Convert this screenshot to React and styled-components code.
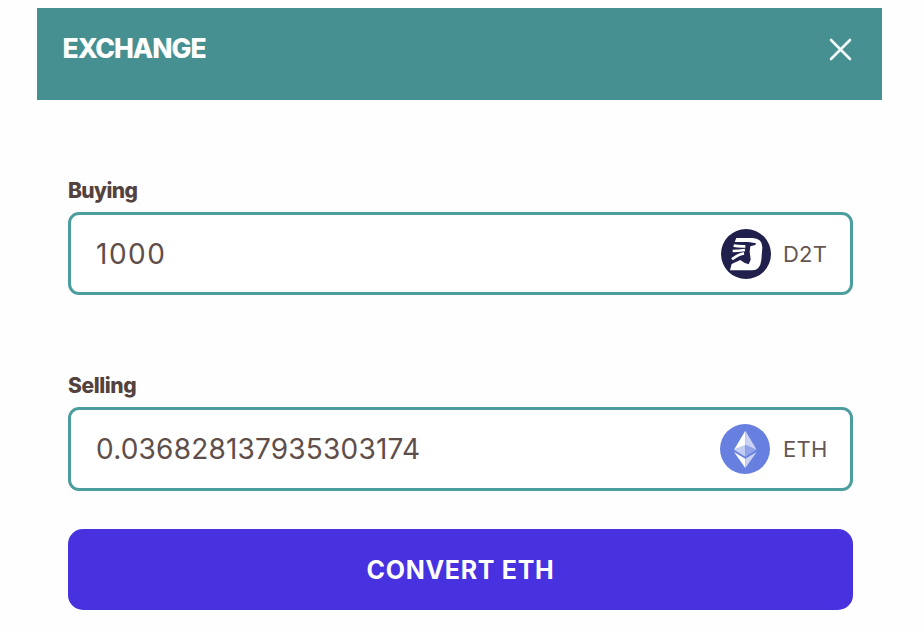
import React, { useState } from 'react';
import styled, { createGlobalStyle } from 'styled-components';

const GlobalStyle = createGlobalStyle`
  * {
    box-sizing: border-box;
  }

  body {
    margin: 0;
    background: #fefefe;
    font-family: Inter, 'Liberation Sans', sans-serif;
    color: #54423e;
  }
`;

const Modal = styled.main`
  width: 845px;
  margin: 8px 0 0 36.5px;
`;

const Header = styled.header`
  display: flex;
  justify-content: space-between;
  align-items: flex-start;
  height: 92px;
  padding: 24px 29.5px 0 26px;
  background: #469092;
  color: #fff;
`;

const Title = styled.h1`
  margin: 0;
  font-size: 26.5px;
  line-height: 33px;
  font-weight: 800;
  letter-spacing: -1px;
`;

const CloseButton = styled.button`
  display: flex;
  margin-top: 6px;
  padding: 0;
  border: none;
  background: none;
  color: inherit;
  cursor: pointer;
`;

const Form = styled.form`
  display: flex;
  flex-direction: column;
  padding: 77px 28.5px 0 31.5px;
`;

const Field = styled.label`
  display: block;
  margin-bottom: ${({ $gap }) => $gap}px;
`;

const Label = styled.span`
  display: block;
  height: 35px;
  font-size: 21px;
  line-height: 28px;
  font-weight: 800;
  letter-spacing: ${({ $spacing }) => $spacing}px;
`;

const InputBox = styled.span`
  display: flex;
  align-items: center;
  height: ${({ $height }) => $height}px;
  padding: 0 22px 0 25px;
  border: 3px solid #4c9d9d;
  border-radius: 11px;
  background: #fff;
`;

const Amount = styled.input`
  flex: 1;
  min-width: 0;
  padding: 0;
  border: none;
  outline: none;
  background: none;
  color: #604e4a;
  font: 400 28px Inter, 'Liberation Sans', sans-serif;
  letter-spacing: ${({ $spacing }) => $spacing}px;
`;

const Token = styled.span`
  display: flex;
  align-items: center;
  gap: ${({ $gap }) => $gap}px;
  color: #665652;
`;

const Symbol = styled.span`
  width: 45px;
  font-size: 22px;
  letter-spacing: ${({ $spacing }) => $spacing}px;
  white-space: nowrap;
`;

const ConvertButton = styled.button`
  height: 81px;
  padding: 1px 0 0;
  border: none;
  border-radius: 15px;
  background: #4831df;
  color: #fff;
  font: 700 25px Inter, 'Liberation Sans', sans-serif;
  letter-spacing: 0.7px;
  cursor: pointer;
`;

const CloseIcon = () => (
  <svg width="23" height="23" viewBox="0 0 23 23" fill="none" stroke="#f4fafa" strokeWidth="2.6" strokeLinecap="round">
    <path d="M2 2 21 21M21 2 2 21" />
  </svg>
);

const D2TIcon = () => (
  <svg width="50" height="50" viewBox="0 0 150 150">
    <circle cx="75" cy="75" r="75" fill="#211f4c" />
    <path
      fill="#fff"
      d="M46 27H94Q124 28 124 55L121 94Q117 124 94 124H27L32 105 58 93 70 101 83 106 89 92 86 68 88 52 103 48 105 43 82 39H41Z"
    />
    <path
      fill="none"
      stroke="#fff"
      strokeWidth="8"
      d="M38 50Q54 53 73 52M35 66Q52 66 72 63M69 73Q49 77 33 91"
    />
  </svg>
);

const EthIcon = () => (
  <svg width="50" height="50" viewBox="0 0 150 150">
    <circle cx="75" cy="75" r="75" fill="#6780df" />
    <path fill="#fff" d="M76 20 42 77 76 64Z" />
    <path fill="#cbd3f5" d="M76 20 110 77 76 64Z" />
    <path fill="#c2cdf3" d="M42 77 76 62V98Z" />
    <path fill="#91a4e7" d="M76 62 110 77 76 98Z" />
    <path fill="#fff" d="M42 84 76 104V132Z" />
    <path fill="#cbd3f5" d="M110 84 76 104V132Z" />
  </svg>
);

const App = () => {
  const [buying, setBuying] = useState('1000');
  const [selling, setSelling] = useState('0.036828137935303174');

  return (
    <>
      <GlobalStyle />
      <Modal>
        <Header>
          <Title>EXCHANGE</Title>
          <CloseButton aria-label="Close">
            <CloseIcon />
          </CloseButton>
        </Header>
        <Form onSubmit={(e) => e.preventDefault()}>
          <Field $gap={77}>
            <Label $spacing={-0.6}>Buying</Label>
            <InputBox $height={83}>
              <Amount $spacing={1.5} value={buying} onChange={(e) => setBuying(e.target.value)} />
              <Token $gap={12}>
                <D2TIcon />
                <Symbol $spacing={0.2}>D2T</Symbol>
              </Token>
            </InputBox>
          </Field>
          <Field $gap={38}>
            <Label $spacing={-0.4}>Selling</Label>
            <InputBox $height={84}>
              <Amount $spacing={0.2} value={selling} onChange={(e) => setSelling(e.target.value)} />
              <Token $gap={13}>
                <EthIcon />
                <Symbol $spacing={0.3}>ETH</Symbol>
              </Token>
            </InputBox>
          </Field>
          <ConvertButton type="submit">CONVERT ETH</ConvertButton>
        </Form>
      </Modal>
    </>
  );
};

export default App;
